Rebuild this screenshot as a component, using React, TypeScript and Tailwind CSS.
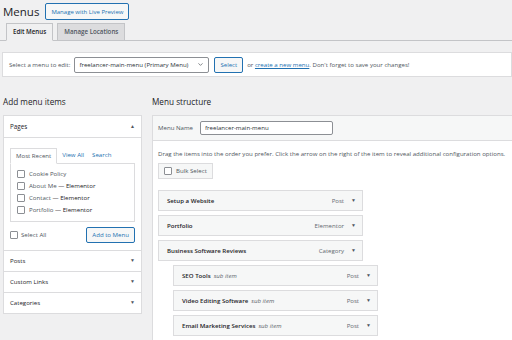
import { ChevronDown } from "lucide-react";

const font = { fontFamily: '"Open Sans", "Noto Sans", sans-serif' };

const Check = () => (
    <span className="inline-block h-[8px] w-[8px] shrink-0 rounded-[1px] border border-[#8c8f94] bg-white" />
);

const Caret = ({ up = false }: { up?: boolean }) => (
    <span className="text-[5px] text-[#50575e]">{up ? "▲" : "▼"}</span>
);

const PAGES = [
    { title: "Cookie Policy", sub: "" },
    { title: "About Me", sub: "Elementor" },
    { title: "Contact", sub: "Elementor" },
    { title: "Portfolio", sub: "Elementor" },
];

const ITEMS = [
    { title: "Setup a Website", type: "Post", sub: false },
    { title: "Portfolio", type: "Elementor", sub: false },
    { title: "Business Software Reviews", type: "Category", sub: false },
    { title: "SEO Tools", type: "Post", sub: true },
    { title: "Video Editing Software", type: "Post", sub: true },
    { title: "Email Marketing Services", type: "Post", sub: true },
];

export default function App() {
    return (
        <div style={font} className="h-[340px] w-[512px] overflow-hidden bg-[#f0f0f1] pt-[3px] text-[#1d2327]">
            {/* title */}
            <div className="flex items-center gap-[6px] pl-[3px]">
                <h1 className="text-[11.5px] leading-[17px] font-normal text-[#1d2327]">Menus</h1>
                <button className="h-[17px] rounded-[2px] border border-[#2271b1] bg-[#f6f7f7] px-[5px] text-[6px] leading-none text-[#2271b1]">
                    Manage with Live Preview
                </button>
            </div>

            {/* tabs */}
            <div className="mt-[3px] flex items-end gap-[4px] border-b border-[#c3c4c7] pl-[6px]">
                <div className="-mb-px flex h-[18px] items-center border border-b-[#f0f0f1] border-[#c3c4c7] bg-[#f0f0f1] px-[6px] text-[6.2px] font-semibold">
                    Edit Menus
                </div>
                <div className="flex h-[17px] items-center border border-b-0 border-[#c3c4c7] bg-[#dcdcde] px-[6px] text-[6.2px] font-semibold text-[#50575e]">
                    Manage Locations
                </div>
            </div>

            {/* select bar */}
            <div className="mt-[11px] ml-[2px] flex h-[25px] items-center gap-[4px] border border-[#dcdcde] bg-white pl-[6px] text-[6.1px] text-[#50575e]">
                <span>Select a menu to edit:</span>
                <div className="flex h-[16px] w-[135px] items-center justify-between rounded-[2px] border border-[#8c8f94] px-[4px] text-[#2c3338]">
                    <span>freelancer-main-menu (Primary Menu)</span>
                    <ChevronDown size={7} strokeWidth={2} />
                </div>
                <button className="ml-[1px] h-[16px] rounded-[2px] border border-[#2271b1] bg-[#f6f7f7] px-[5px] text-[#2271b1]">
                    Select
                </button>
                <span>
                    or <span className="text-[#2271b1] underline">create a new menu</span>. Don't forget to save your changes!
                </span>
            </div>

            {/* columns */}
            <div className="mt-[19px] flex gap-[10px] pl-[3px]">
                {/* left */}
                <div className="w-[139px] shrink-0">
                    <h2 className="mb-[8px] text-[8.2px] leading-[11px] font-normal">Add menu items</h2>
                    <div className="border border-[#dcdcde] bg-white">
                        <div className="flex h-[22px] items-center justify-between border-b border-[#dcdcde] px-[6px] text-[6.3px]">
                            <span>Pages</span>
                            <Caret up />
                        </div>
                        <div className="px-[6px] pt-[10px] pb-[7px]">
                            <div className="flex items-end whitespace-nowrap text-[6.1px]">
                                <div className="-mb-px flex h-[16px] items-center border border-b-white border-[#dcdcde] bg-white px-[5px] text-[#50575e]">
                                    Most Recent
                                </div>
                                <span className="ml-[5px] pb-[4px] text-[#2271b1]">View All</span>
                                <span className="ml-[8px] pb-[4px] text-[#2271b1]">Search</span>
                            </div>
                            <div className="flex h-[59px] flex-col gap-[4px] border border-[#dcdcde] px-[6px] pt-[6px] text-[6.1px] text-[#50575e]">
                                {PAGES.map((p) => (
                                    <div key={p.title} className="flex h-[8px] items-center gap-[4px]">
                                        <Check />
                                        <span>
                                            {p.title}
                                            {p.sub && <span className="text-[#1d2327]"> — {p.sub}</span>}
                                        </span>
                                    </div>
                                ))}
                            </div>
                            <div className="mt-[5px] flex items-center justify-between text-[6.1px]">
                                <div className="flex items-center gap-[3px] text-[#50575e]">
                                    <Check />
                                    <span>Select All</span>
                                </div>
                                <button className="h-[16px] rounded-[2px] border border-[#2271b1] bg-[#f6f7f7] px-[5px] text-[#2271b1]">
                                    Add to Menu
                                </button>
                            </div>
                        </div>
                        {["Posts", "Custom Links", "Categories"].map((s) => (
                            <div
                                key={s}
                                className="flex h-[21px] items-center justify-between border-t border-[#dcdcde] px-[6px] text-[6.1px]"
                            >
                                <span>{s}</span>
                                <Caret />
                            </div>
                        ))}
                    </div>
                </div>

                {/* right */}
                <div className="flex-1">
                    <h2 className="mb-[8px] text-[8.2px] leading-[11px] font-normal">Menu structure</h2>
                    <div className="h-[240px] w-[380px] border border-[#dcdcde] bg-white">
                        <div className="flex h-[25px] items-center gap-[7px] border-b border-[#dcdcde] bg-[#f6f7f7] px-[5px] text-[6.1px] text-[#50575e]">
                            <span>Menu Name</span>
                            <div className="flex h-[14px] w-[133px] items-center rounded-[2px] border border-[#8c8f94] bg-white px-[4px] text-[#2c3338]">
                                freelancer-main-menu
                            </div>
                        </div>
                        <div className="px-[5px] pt-[8px]">
                            <p className="whitespace-nowrap text-[6.1px] leading-[9px] text-[#50575e]">
                                Drag the items into the order you prefer. Click the arrow on the right of the item to reveal additional configuration options.
                            </p>
                            <div className="mt-[5px] flex h-[16px] w-fit items-center gap-[4px] whitespace-nowrap border border-[#dcdcde] bg-[#f6f7f7] px-[5px] text-[6.1px] text-[#50575e]">
                                <Check />
                                <span>Bulk Select</span>
                            </div>
                            <div className="mt-[11px] flex flex-col gap-[4px]">
                                {ITEMS.map((it) => (
                                    <div
                                        key={it.title}
                                        className={`flex h-[21px] w-[205px] items-center justify-between border border-[#dcdcde] bg-[#f6f7f7] pr-[6px] pl-[8px] text-[6.1px] ${it.sub ? "ml-[15px]" : ""}`}
                                    >
                                        <span className="font-semibold text-[#1d2327]">
                                            {it.title}
                                            {it.sub && (
                                                <span className="ml-[3px] font-normal italic text-[#646970]">sub item</span>
                                            )}
                                        </span>
                                        <span className="flex items-center gap-[7px] text-[#646970]">
                                            {it.type}
                                            <Caret />
                                        </span>
                                    </div>
                                ))}
                            </div>
                        </div>
                    </div>
                </div>
            </div>
        </div>
    );
}
